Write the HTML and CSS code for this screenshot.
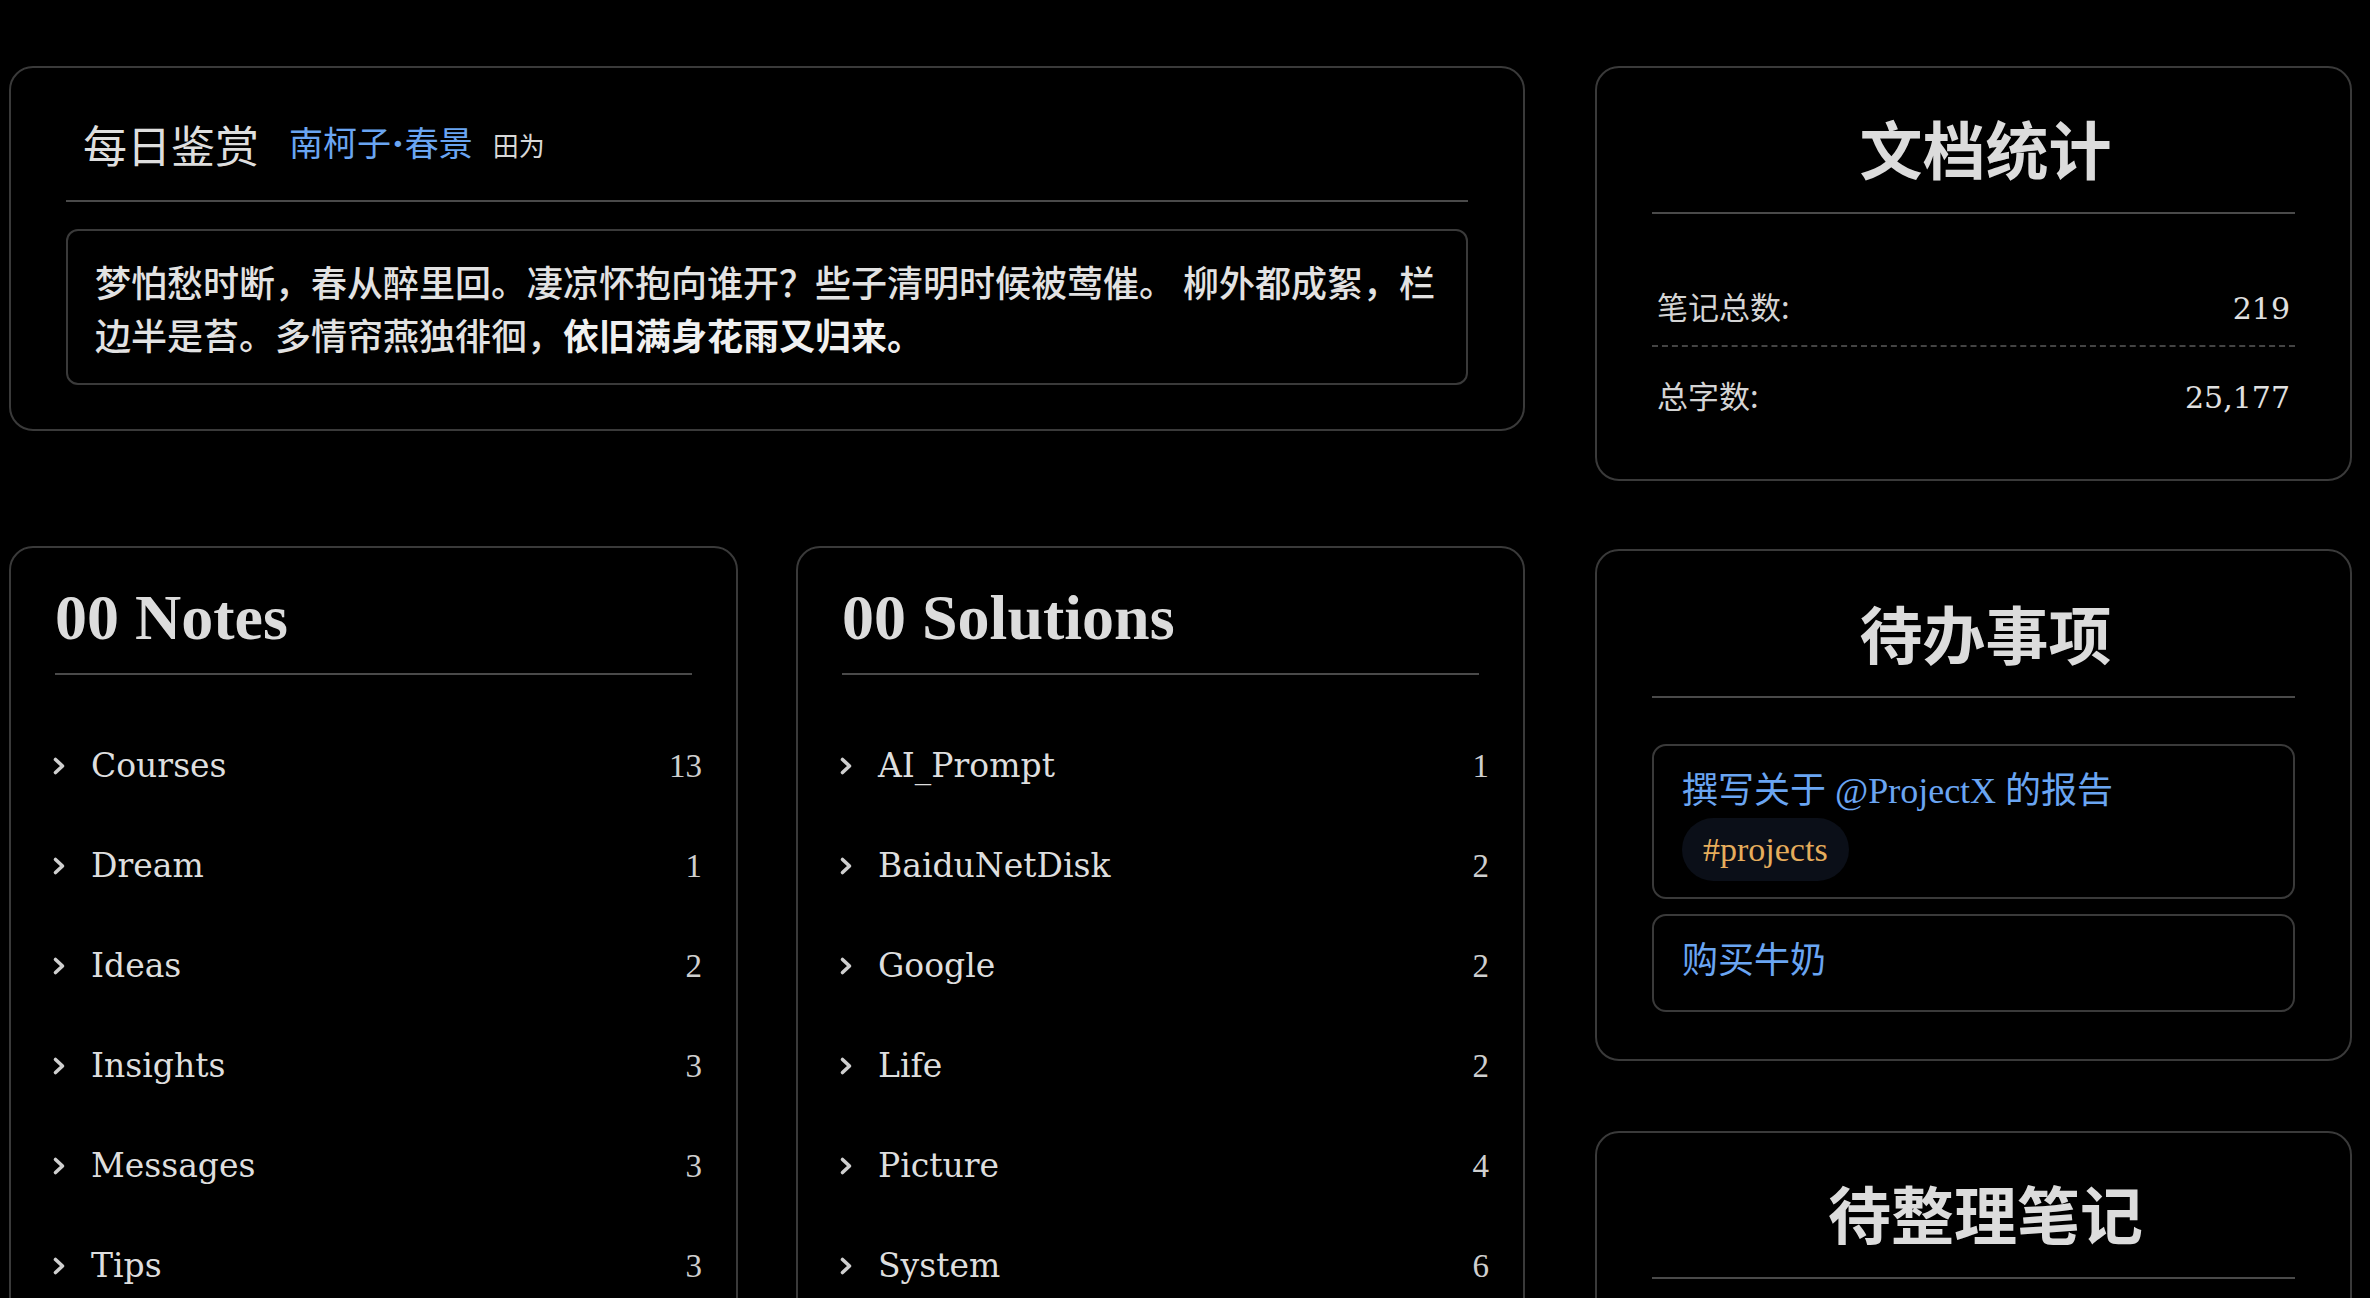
FILE: index.html
```html
<!DOCTYPE html>
<html lang="zh-CN">
<head>
<meta charset="utf-8">
<title>Dashboard</title>
<link rel="stylesheet" href="styles.css">
</head>
<body>
<div class="page">
  <section class="card daily">
    <div class="daily-head"><span class="daily-title">每日鉴赏</span><span class="poem-title">南柯子<span class="dot">·</span>春景</span><span class="poem-author">田为</span></div>
    <blockquote class="poem">梦怕愁时断，春从醉里回。凄凉怀抱向谁开？些子清明时候被莺催。 柳外都成絮，栏边半是苔。多情帘燕独徘徊，<strong>依旧满身花雨又归来。</strong></blockquote>
  </section>

  <section class="card side-card stats">
    <h2 class="side-title">文档统计</h2>
    <ul class="stat-list">
      <li class="stat-row"><span class="stat-label">笔记总数:</span><span class="stat-num">219</span></li>
      <li class="stat-row"><span class="stat-label">总字数:</span><span class="stat-num">25,177</span></li>
    </ul>
  </section>

  <div class="folders">
    <section class="card folder">
      <h2 class="folder-title">00 Notes</h2>
      <ul class="folder-list">
        <li class="folder-item"><svg class="chev" viewBox="0 0 14 20" width="14" height="20"><path d="M3.5 3.5 L10.5 10 L3.5 16.5"/></svg><span class="folder-name">Courses</span><span class="folder-count">13</span></li>
        <li class="folder-item"><svg class="chev" viewBox="0 0 14 20" width="14" height="20"><path d="M3.5 3.5 L10.5 10 L3.5 16.5"/></svg><span class="folder-name">Dream</span><span class="folder-count">1</span></li>
        <li class="folder-item"><svg class="chev" viewBox="0 0 14 20" width="14" height="20"><path d="M3.5 3.5 L10.5 10 L3.5 16.5"/></svg><span class="folder-name">Ideas</span><span class="folder-count">2</span></li>
        <li class="folder-item"><svg class="chev" viewBox="0 0 14 20" width="14" height="20"><path d="M3.5 3.5 L10.5 10 L3.5 16.5"/></svg><span class="folder-name">Insights</span><span class="folder-count">3</span></li>
        <li class="folder-item"><svg class="chev" viewBox="0 0 14 20" width="14" height="20"><path d="M3.5 3.5 L10.5 10 L3.5 16.5"/></svg><span class="folder-name">Messages</span><span class="folder-count">3</span></li>
        <li class="folder-item"><svg class="chev" viewBox="0 0 14 20" width="14" height="20"><path d="M3.5 3.5 L10.5 10 L3.5 16.5"/></svg><span class="folder-name">Tips</span><span class="folder-count">3</span></li>
      </ul>
    </section>
    <section class="card folder">
      <h2 class="folder-title">00 Solutions</h2>
      <ul class="folder-list">
        <li class="folder-item"><svg class="chev" viewBox="0 0 14 20" width="14" height="20"><path d="M3.5 3.5 L10.5 10 L3.5 16.5"/></svg><span class="folder-name">AI_Prompt</span><span class="folder-count">1</span></li>
        <li class="folder-item"><svg class="chev" viewBox="0 0 14 20" width="14" height="20"><path d="M3.5 3.5 L10.5 10 L3.5 16.5"/></svg><span class="folder-name">BaiduNetDisk</span><span class="folder-count">2</span></li>
        <li class="folder-item"><svg class="chev" viewBox="0 0 14 20" width="14" height="20"><path d="M3.5 3.5 L10.5 10 L3.5 16.5"/></svg><span class="folder-name">Google</span><span class="folder-count">2</span></li>
        <li class="folder-item"><svg class="chev" viewBox="0 0 14 20" width="14" height="20"><path d="M3.5 3.5 L10.5 10 L3.5 16.5"/></svg><span class="folder-name">Life</span><span class="folder-count">2</span></li>
        <li class="folder-item"><svg class="chev" viewBox="0 0 14 20" width="14" height="20"><path d="M3.5 3.5 L10.5 10 L3.5 16.5"/></svg><span class="folder-name">Picture</span><span class="folder-count">4</span></li>
        <li class="folder-item"><svg class="chev" viewBox="0 0 14 20" width="14" height="20"><path d="M3.5 3.5 L10.5 10 L3.5 16.5"/></svg><span class="folder-name">System</span><span class="folder-count">6</span></li>
      </ul>
    </section>
  </div>

  <div class="side-stack">
    <section class="card side-card todo">
      <h2 class="side-title">待办事项</h2>
      <ul class="todo-list">
        <li class="todo-item">撰写关于 @ProjectX 的报告 <span class="tag">#projects</span></li>
        <li class="todo-item">购买牛奶</li>
      </ul>
    </section>
    <section class="card side-card pending">
      <h2 class="side-title">待整理笔记</h2>
      <ul class="todo-list">
        <li class="todo-item">暂无待整理笔记</li>
      </ul>
    </section>
  </div>
</div>
</body>
</html>
```

FILE: styles.css
```css
html {
  overflow: hidden;
  background: #000;
}

body {
  margin: 0;
  background: #000;
  color: #dcdcdc;
  font-family: "DejaVu Serif", "Noto Sans CJK SC", serif;
}

ul {
  list-style: none;
  margin: 0;
  padding: 0;
}

h2 {
  margin: 0;
}

.page {
  display: grid;
  grid-template-columns: 1fr 757px;
  column-gap: 70px;
  row-gap: 65px;
  align-items: start;
  padding: 66px 18px 0 9px;
}

.card {
  border: 2px solid #3a3a3a;
  border-radius: 24px;
  background: #000;
}

/* ---------- daily poem ---------- */
.daily {
  padding: 39px 55px 44px;
  font-family: "Noto Sans CJK SC", sans-serif;
}

.daily-head {
  font-size: 44px;
  line-height: 60px;
  padding: 0 0 26px 17px;
  border-bottom: 2px solid #4a4a4a;
  color: #dedede;
}

.daily-title {
  vertical-align: -7px;
}

.poem-title {
  font-size: 34px;
  line-height: 1;
  margin-left: 30px;
  color: #6aa5f2;
}

.dot {
  font-family: "DejaVu Serif", serif;
  font-weight: 700;
  margin: 0 1px;
}

.poem-author {
  font-size: 26px;
  line-height: 1;
  margin-left: 20px;
  color: #d8d8d8;
}

.poem {
  margin: 27px 0 0;
  padding: 24px 18px 23px 27px;
  border: 2px solid #3a3a3a;
  border-radius: 12px;
  font-size: 36px;
  line-height: 52.5px;
  font-weight: 500;
  color: #e2e2e2;
}

.poem strong {
  font-weight: 700;
  color: #f0f0f0;
}

/* ---------- side cards ---------- */
.side-card {
  padding: 41px 55px 42px;
}

.stats {
  padding-bottom: 45px;
}

.side-title {
  font-family: "Noto Sans CJK SC", sans-serif;
  font-size: 63px;
  line-height: 75.6px;
  font-weight: 700;
  text-align: center;
  padding: 0 0 27px 24px;
  border-bottom: 2px solid #4a4a4a;
  color: #dcdcdc;
}

.stat-list {
  margin-top: 55px;
}

.stat-row {
  display: flex;
  justify-content: space-between;
  align-items: baseline;
  padding: 16px 5px 15px;
  line-height: 42px;
}

.stat-row + .stat-row {
  margin-top: 11px;
}

.stat-row:first-child {
  border-bottom: 2px dashed #444;
}

.stat-label {
  font-family: "Noto Sans CJK SC", sans-serif;
  font-size: 31px;
  color: #d4d4d4;
}

.stat-num {
  font-family: "DejaVu Serif", serif;
  font-size: 30px;
  color: #e0e0e0;
}

.side-stack {
  display: flex;
  flex-direction: column;
  gap: 70px;
  margin-top: 3px;
}

.todo {
  padding-top: 43px;
  padding-bottom: 47px;
}

.todo-list {
  margin-top: 46px;
  display: flex;
  flex-direction: column;
  gap: 15px;
}

.todo-item {
  border: 2px solid #3a3a3a;
  border-radius: 14px;
  padding: 17px 28px 19px;
  font-family: "Liberation Serif", "Noto Sans CJK SC", serif;
  font-size: 36px;
  line-height: 57.6px;
  color: #6aa5f2;
}

.tag {
  font-size: 34px;
  padding: 13px 21px;
  border-radius: 32px;
  background: #0b0f18;
  color: #e6ad5c;
}

.pending {
  padding-bottom: 300px;
}

/* ---------- folders ---------- */
.folders {
  display: grid;
  grid-template-columns: 1fr 1fr;
  column-gap: 58px;
  align-items: start;
}

.folder {
  padding: 32px 44px 60px;
}

.folder-title {
  font-family: "Liberation Serif", serif;
  font-size: 64px;
  line-height: 76.8px;
  font-weight: 700;
  padding-bottom: 17px;
  border-bottom: 2px solid #4a4a4a;
  color: #dcdcdc;
}

.folder-list {
  margin: 41px -10px 0 -3px;
}

.folder-item {
  display: flex;
  align-items: center;
  padding: 25px 0;
  line-height: 50px;
}

.chev {
  flex: none;
  fill: none;
  stroke: #cfcfcf;
  stroke-width: 3.6;
  stroke-linecap: round;
  stroke-linejoin: round;
}

.folder-name {
  margin-left: 25px;
  font-family: "DejaVu Serif", serif;
  font-size: 33px;
  color: #dedede;
}

.folder-count {
  margin-left: auto;
  font-family: "Liberation Serif", serif;
  font-size: 33px;
  color: #cfcfcf;
}
```
